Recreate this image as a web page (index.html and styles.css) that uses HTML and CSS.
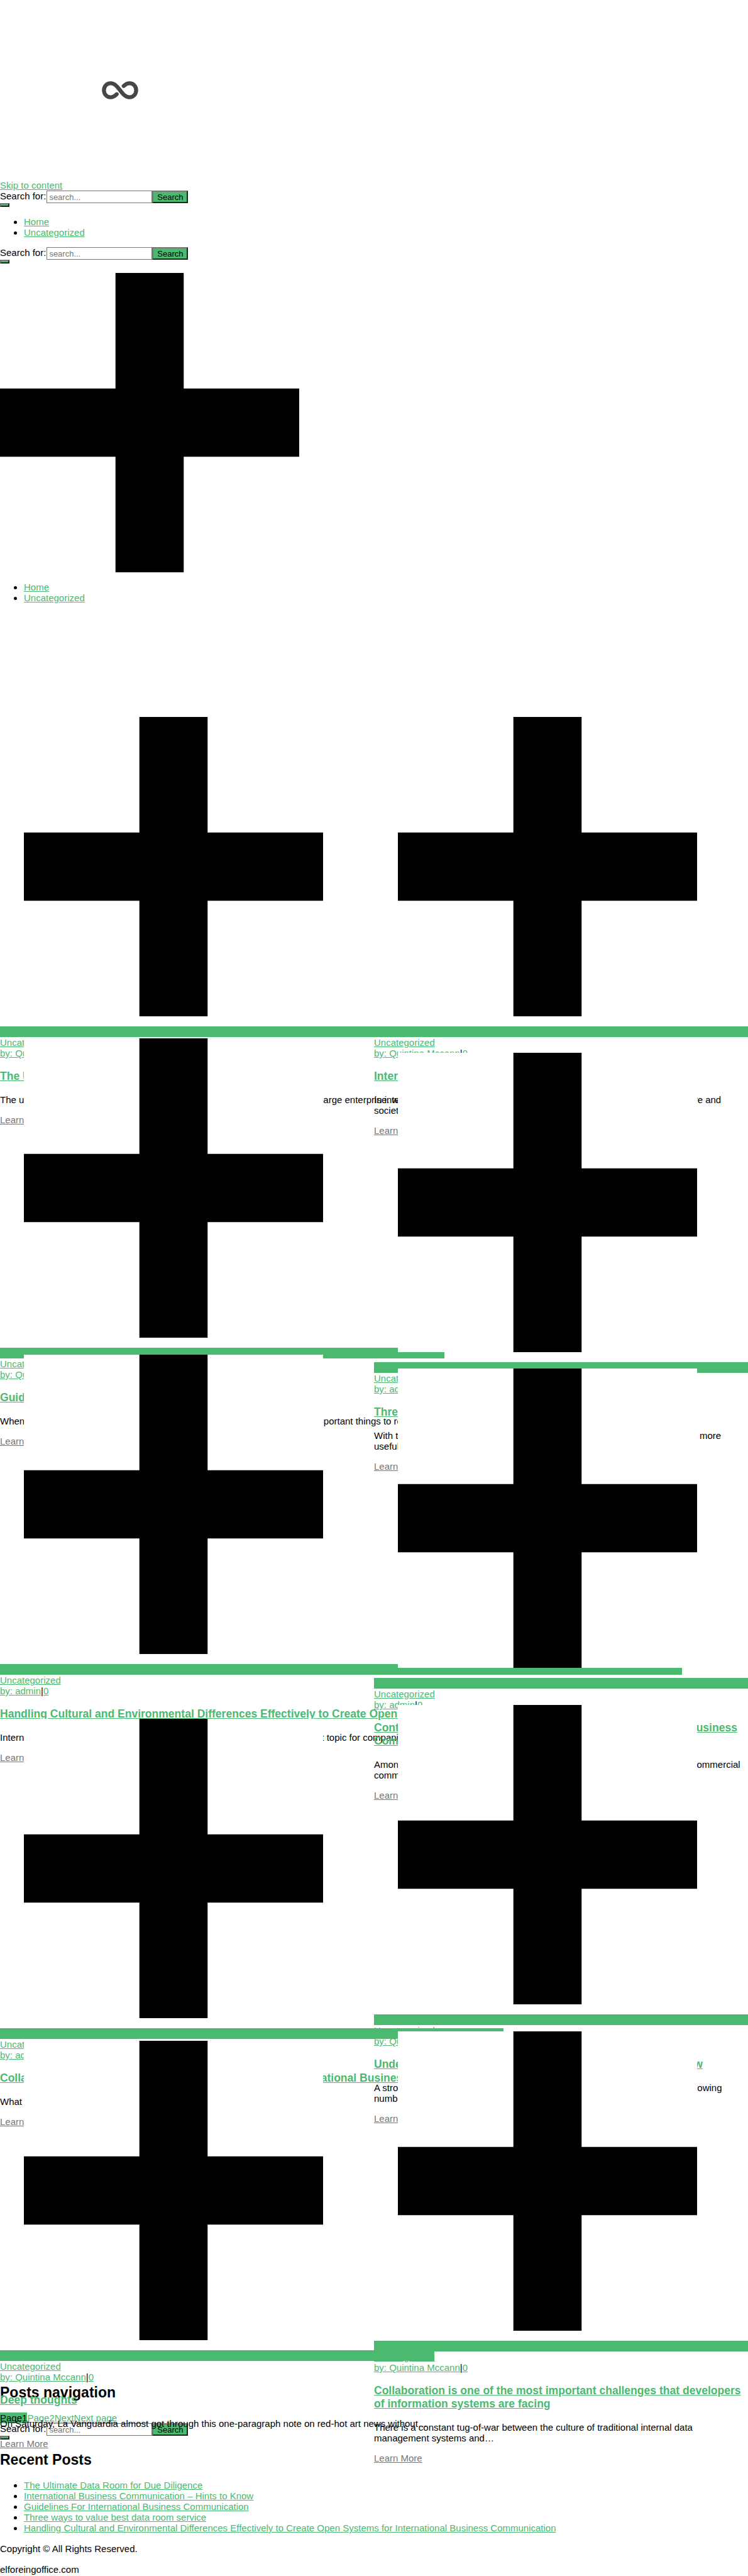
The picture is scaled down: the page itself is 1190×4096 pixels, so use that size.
FILE: index.html
```html
<!DOCTYPE html>
<html lang="en">
<head>
<meta charset="utf-8">
<title>elforeingoffice.com</title>
<link rel="stylesheet" href="styles.css">
</head>
<body>
<svg width="0" height="0" class="defs" aria-hidden="true">
  <symbol id="plus" viewBox="0 0 500 500"><path fill="#fff" d="M0 0h500v500H0z"/><path d="M193 0h114v193h193v114H307v193H193V307H0V193h193z"/></symbol>
</svg>
<div class="loader">
  <svg viewBox="0 0 60 30" width="58" height="29" role="img" aria-label="Loading"><path d="M24.5 21.5C21 25 18 26.5 14.500 26.500C8 26.500 3.500 21.500 3.500 15S8 3.500 14.500 3.500C21 3.500 25 8.500 30 15S39 26.500 45.500 26.500C52 26.500 56.500 21.500 56.500 15S52 3.500 45.500 3.500C42 3.500 39 5 36 8" fill="none" stroke="#464646" stroke-width="6.500" stroke-linecap="round"/></svg>
</div>
<header>
  <div><a href="#content">Skip to content</a></div>
  <form class="search"><label for="s1">Search for:</label><input id="s1" type="search" placeholder="search..."><button type="button">Search</button></form>
  <button class="toggle" type="button" aria-label="Toggle menu"></button>
  <ul><li><a href="#">Home</a></li><li><a href="#">Uncategorized</a></li></ul>
  <form class="search"><label for="s2">Search for:</label><input id="s2" type="search" placeholder="search..."><button type="button">Search</button></form>
  <button class="toggle" type="button" aria-label="Close menu"></button>
  <svg class="plus hero"><use href="#plus"/></svg>
  <ul><li><a href="#">Home</a></li><li><a href="#">Uncategorized</a></li></ul>
</header>
<main id="content">
  <div class="posts">
    <div class="column wide">
      <article class="card step-511 z1">
        <figure><svg class="plus"><use href="#plus"/></svg></figure>
        <div class="bar"></div>
        <div><a href="#">Uncategorized</a></div>
        <div><a href="#">by: Quintina Mccann</a>|<a href="#">0</a></div>
        <h3><a href="#">The Ultimate Data Room for Due Diligence</a></h3>
        <p><span class="lead w-511">The use of data rooms is no longer limited to the</span>large enterprise. we</p>
        <a class="more" href="#">Learn More</a>
      </article>
      <article class="card step-503 z3 min-707">
        <figure><svg class="plus"><use href="#plus"/></svg></figure>
        <div class="bar"></div>
        <div><a href="#">Uncategorized</a></div>
        <div><a href="#">by: Quintina Mccann</a>|<a href="#">0</a></div>
        <h3><a href="#">Guidelines For International Business Communication</a></h3>
        <p><span class="lead w-499">When communicating abroad, there are some</span>important things to remember</p>
        <a class="more" href="#">Learn More</a>
      </article>
      <article class="card step-579 z5 min-1085">
        <figure><svg class="plus"><use href="#plus"/></svg></figure>
        <div class="bar"></div>
        <div><a href="#">Uncategorized</a></div>
        <div><a href="#">by: admin</a>|<a href="#">0</a></div>
        <h3><a href="#">Handling Cultural and Environmental Differences Effectively to Create Open Systems for International Business Communication</a></h3>
        <p><span class="lead w-453">International business communication is an</span>important topic for companies</p>
        <a class="more" href="#">Learn More</a>
      </article>
      <article class="card step-512 z8 min-801">
        <figure><svg class="plus"><use href="#plus"/></svg></figure>
        <div class="bar"></div>
        <div><a href="#">Uncategorized</a></div>
        <div><a href="#">by: admin</a>|<a href="#">0</a></div>
        <h3><a href="#"><span class="lead w-462">Collaborative Systems and Software for</span>International Business</a></h3>
        <p>What is it?</p>
        <a class="more" href="#">Learn More</a>
      </article>
      <article class="card step-542 z10 min-691">
        <figure><svg class="plus"><use href="#plus"/></svg></figure>
        <div class="bar"></div>
        <div><a href="#">Uncategorized</a></div>
        <div><a href="#">by: Quintina Mccann</a>|<a href="#">0</a></div>
        <h3><a href="#">Deep thoughts</a></h3>
        <p>On Saturday, La Vanguardia almost got through this one-paragraph note on red-hot art news without…</p>
        <a class="more" href="#">Learn More</a>
      </article>
    </div>
    <div class="column">
      <article class="card step-534 z2">
        <figure><svg class="plus"><use href="#plus"/></svg></figure>
        <div class="bar"></div>
        <div><a href="#">Uncategorized</a></div>
        <div><a href="#">by: Quintina Mccann</a>|<a href="#">0</a></div>
        <h3><a href="#">International Business Communication – Hints to Know</a></h3>
        <p><span class="lead w-478">In international business, it helps to know the</span>culture and<br>society</p>
        <a class="more" href="#">Learn More</a>
      </article>
      <article class="card step-502 z4">
        <figure><svg class="plus"><use href="#plus"/></svg></figure>
        <div class="bar"></div>
        <div><a href="#">Uncategorized</a></div>
        <div><a href="#">by: admin</a>|<a href="#">0</a></div>
        <h3><a href="#">Three ways to value best data room service</a></h3>
        <p><span class="lead w-518">With the right service, a data room becomes</span>more<br>useful</p>
        <a class="more" href="#">Learn More</a>
      </article>
      <article class="card step-535 z6">
        <figure><svg class="plus"><use href="#plus"/></svg></figure>
        <div class="bar short"></div>
        <div><a href="#">Uncategorized</a></div>
        <div><a href="#">by: admin</a>|<a href="#">0</a></div>
        <h3><a href="#"><span class="lead w-500">Contemporary Issues in International</span>Business<br>Communication</a></h3>
        <p><span class="lead w-506">Among the many issues in international</span>commercial<br>communication</p>
        <a class="more" href="#">Learn More</a>
      </article>
      <article class="card step-519 z7">
        <figure><svg class="plus"><use href="#plus"/></svg></figure>
        <div class="bar short"></div>
        <div><a href="#">Uncategorized</a></div>
        <div><a href="#">by: Quintina Mccann</a>|<a href="#">0</a></div>
        <h3><a href="#"><span class="lead w-486">Understanding Business Communication</span>Now</a></h3>
        <p><span class="lead w-501">A strong business is aware of the rapidly</span>growing<br>number</p>
        <a class="more" href="#">Learn More</a>
      </article>
      <article class="card step-542 z9">
        <figure><svg class="plus"><use href="#plus"/></svg></figure>
        <div class="bar"></div>
        <div><a href="#">Uncategorized</a></div>
        <div><a href="#">by: Quintina Mccann</a>|<a href="#">0</a></div>
        <h3><a href="#">Collaboration is one of the most important challenges that developers<br>of information systems are facing</a></h3>
        <p>There is a constant tug-of-war between the culture of traditional internal data<br>management systems and…</p>
        <a class="more" href="#">Learn More</a>
      </article>
    </div>
  </div>
  <nav>
    <h2>Posts navigation</h2>
    <div><span class="current">Page1</span><a href="#">Page2</a><a href="#">Next</a><a href="#">Next page</a></div>
  </nav>
</main>
<aside>
  <form class="search"><label for="s3">Search for:</label><input id="s3" type="search" placeholder="search..."><button type="button">Search</button></form>
  <button class="toggle" type="button" aria-label="Close search"></button>
  <h2>Recent Posts</h2>
  <ul>
    <li><a href="#">The Ultimate Data Room for Due Diligence</a></li>
    <li><a href="#">International Business Communication – Hints to Know</a></li>
    <li><a href="#">Guidelines For International Business Communication</a></li>
    <li><a href="#">Three ways to value best data room service</a></li>
    <li><a href="#">Handling Cultural and Environmental Differences Effectively to Create Open Systems for International Business Communication</a></li>
  </ul>
</aside>
<footer>
  <p>Copyright © All Rights Reserved.</p>
  <p>elforeingoffice.com</p>
</footer>
</body>
</html>
```
FILE: styles.css
```css
* { box-sizing: border-box; }
body {
  margin: 0;
  background: #fff;
  color: #000;
  font: 15px/17px "Liberation Sans", Arial, sans-serif;
}
a { color: #4bb970; }
ul { margin: 15px 0; padding-left: 38px; }
h2 { margin: 19px 0; font-size: 23px; line-height: 26px; }
h3 { margin: 18px 0; line-height: 21px; }
p { margin: 15px 0; }
.defs { display: none; }

.loader {
  display: flex;
  align-items: center;
  justify-content: center;
  width: 382px;
  height: 286px;
}

.search { display: flex; }
.search label { line-height: 18px; padding-right: 1px; }
.search input {
  width: 168px;
  height: 20px;
  padding: 1px 3px;
  border: 1px solid #767676;
  background: none;
  font: 13px "Liberation Sans", Arial, sans-serif;
}
.search input::placeholder { color: #757575; }
.search button,
.toggle {
  border: 2px solid;
  border-color: #767676 #212121 #212121 #767676;
  background: #4bb970;
  color: #000;
}
.search button {
  width: 57px;
  height: 20px;
  padding: 0;
  font: 13px "Liberation Sans", Arial, sans-serif;
}
.toggle { display: block; width: 15px; height: 6px; padding: 0; }

.plus { display: block; width: 476px; height: 476px; }
.hero { margin-top: 15px; }

.posts {
  display: grid;
  grid-template-columns: 1fr 1fr;
  margin-top: 166px;
}
.column { min-width: 0; }
.card { position: relative; }
.wide .card { width: max-content; min-width: 100%; white-space: nowrap; }
.card h3 { white-space: nowrap; }
.card p { margin: 18px 0 15px; white-space: nowrap; }
.card figure { margin: 0; padding: 15px 38px 16px; }
.bar { height: 17px; background: #4bb970; }
.bar::before {
  content: "";
  display: block;
  width: 17px;
  height: 17px;
  border-bottom: 1px solid #fff;
}
.bar.short::before { width: 8px; }
.more { color: #777; }
.lead { display: inline-block; text-decoration: inherit; }

/* Masonry steps: each card starts before the previous one ends */
.step-502 { height: 502px; }
.step-503 { height: 503px; }
.step-511 { height: 511px; }
.step-512 { height: 512px; }
.step-519 { height: 519px; }
.step-534 { height: 534px; }
.step-535 { height: 535px; }
.step-542 { height: 542px; }
.step-579 { height: 579px; }

.wide .min-691 { min-width: 691px; }
.wide .min-707 { min-width: 707px; }
.wide .min-801 { min-width: 801px; }
.wide .min-1085 { min-width: 1085px; }

.w-453 { width: 453px; }
.w-462 { width: 462px; }
.w-478 { width: 478px; }
.w-486 { width: 486px; }
.w-499 { width: 499px; }
.w-500 { width: 500px; }
.w-501 { width: 501px; }
.w-506 { width: 506px; }
.w-511 { width: 511px; }
.w-518 { width: 518px; }

.z1 { z-index: 1; }
.z2 { z-index: 2; }
.z3 { z-index: 3; }
.z4 { z-index: 4; }
.z5 { z-index: 5; }
.z6 { z-index: 6; }
.z7 { z-index: 7; }
.z8 { z-index: 8; }
.z9 { z-index: 9; }
.z10 { z-index: 10; }

.current { background: #4bb970; }
nav h2 + div a { text-decoration: underline; }
footer p { margin: 16px 0 0; }
```
